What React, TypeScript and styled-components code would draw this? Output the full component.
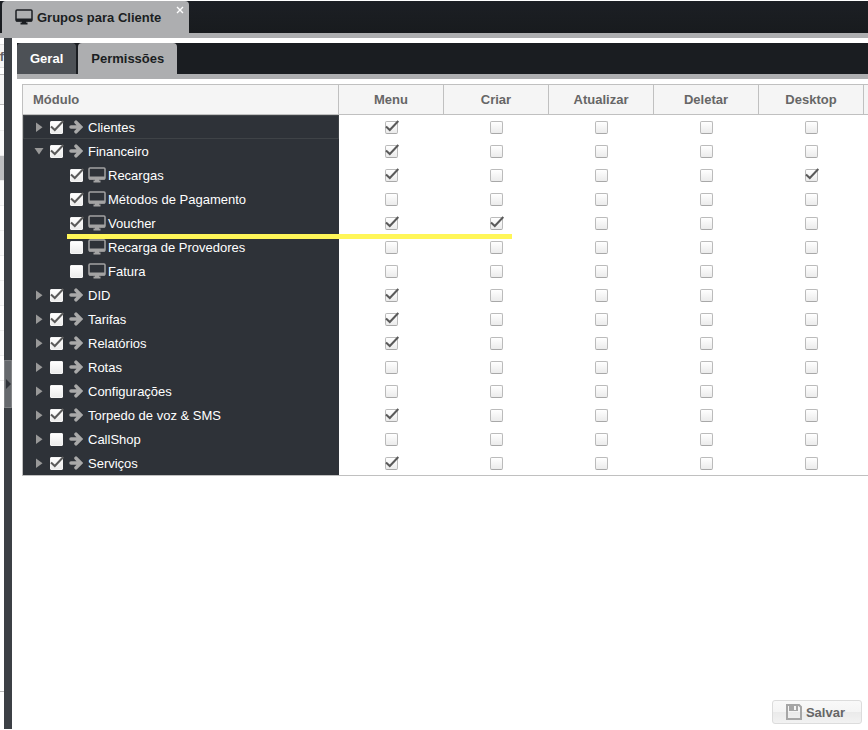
import React, { useState } from "react";
import styled, { createGlobalStyle, css } from "styled-components";

const GlobalStyle = createGlobalStyle`
  *, *::before, *::after { box-sizing: border-box; }
  body {
    margin: 0;
    background: #fff;
    font-family: "Liberation Sans", Helvetica, Arial, sans-serif;
    font-size: 13px;
  }
  button, input { font: inherit; }
`;

const Page = styled.div`
  display: flex;
  flex-direction: column;
  min-height: 100vh;
  padding: 1px 0;
  overflow: hidden;
`;

const WindowBar = styled.header`
  display: flex;
  padding: 0 2px;
  background: linear-gradient(#1c1f24, #181b1e);
  border-bottom: 5px solid #adaeb0;
`;

const WindowTab = styled.div`
  display: flex;
  align-items: flex-start;
  height: 32px;
  padding-left: 13px;
  background: #adaeb0;
  border-radius: 4px 4px 0 0;
`;

const WindowTitle = styled.button`
  display: flex;
  align-items: center;
  gap: 4px;
  height: 32px;
  padding: 0;
  border: 0;
  background: none;
  color: #1b1e22;
  font-weight: bold;
`;

const CloseButton = styled.button`
  display: flex;
  margin-left: 14px;
  padding: 5px 5px 4px 1px;
  border: 0;
  background: none;
`;

const Workspace = styled.div`
  display: flex;
  flex: 1;
`;

const SidePanel = styled.aside`
  flex: none;
  width: 4px;
  padding-top: 6px;
  overflow: hidden;
`;

const SideHeader = styled.div`
  display: flex;
  justify-content: flex-end;
  height: 24px;
  line-height: 23px;
  background: #f5f5f5;
  border: solid #ddd;
  border-width: 1px 0;
  color: #666;
  font-weight: bold;
`;

const SideToolbar = styled.div`
  height: 37px;
  margin-bottom: 1px;
  border: solid #bbb;
  border-width: 0 0 1px;
  background: linear-gradient(#fff 6px, #bbb 6px, #bbb 7px, #f5f5f5 7px);
`;

const SideRow = styled.div<{ $selected?: boolean; $alt?: boolean }>`
  height: 25px;
  border-bottom: 1px solid #ededed;
  background: ${(p) => (p.$selected ? "#bebfc1" : p.$alt ? "#fafafa" : "#fff")};
`;

const SideBody = styled.div`
  height: 586px;
  border-bottom: 1px solid #bbb;
`;

const Splitter = styled.div`
  display: flex;
  flex: none;
  align-items: center;
  width: 8px;
  background: #3c4045;
`;

const SplitterHandle = styled.button`
  display: flex;
  align-items: center;
  justify-content: center;
  width: 8px;
  height: 48px;
  padding: 0;
  border: 1px solid #808285;
  background: #66696d;
`;

const Main = styled.main`
  display: flex;
  flex: 1;
  flex-direction: column;
  min-width: 0;
  padding: 5px 0 5px 5px;
`;

const TabBar = styled.div`
  display: flex;
  gap: 2px;
  background: #1a1d21;
  border-bottom: 5px solid #adaeb0;
`;

const Tab = styled.button<{ $active?: boolean }>`
  height: 31px;
  padding: 0 13px;
  border: 0;
  border-radius: 4px 4px 0 0;
  background: #4d5156;
  color: #fff;
  font-weight: bold;
  ${(p) =>
    p.$active &&
    css`
      background: #adaeb0;
      color: #1b1e22;
    `}
`;

const GridPanel = styled.section`
  padding: 5px 0 0 5px;
`;

const Grid = styled.table`
  width: 100%;
  table-layout: fixed;
  border-collapse: separate;
  border-spacing: 0;
  border: solid #c0c0c0;
  border-width: 1px 0 1px 1px;
`;

const ModuleCol = styled.col`
  width: 316px;
`;

const FlagCol = styled.col`
  width: 105px;
`;

const HeadCell = styled.th<{ $start?: boolean }>`
  height: 30px;
  padding: 0 10px;
  border: solid #c0c0c0;
  border-width: 0 1px 1px 0;
  background: #f5f5f5;
  color: #666;
  text-align: ${(p) => (p.$start ? "left" : "center")};

  &:last-child {
    padding: 0;
    border-right: 0;
  }
`;

const ModuleCell = styled.th<{ $focused?: boolean }>`
  position: relative;
  height: 24px;
  padding: 0;
  background: #2e3238;
  color: #fff;
  font-weight: normal;
  text-align: left;
  ${(p) =>
    p.$focused &&
    css`
      box-shadow: inset 0 0 0 1px #3f4347;
    `}
`;

const ModuleContent = styled.div<{ $child?: boolean }>`
  display: flex;
  align-items: center;
  height: 24px;
  padding-left: ${(p) => (p.$child ? 47 : 10)}px;
`;

const Expander = styled.button`
  display: flex;
  align-items: center;
  justify-content: center;
  width: 12px;
  height: 12px;
  margin-right: 5px;
  padding: 0;
  border: 0;
  background: none;
`;

const ModuleLabel = styled.label`
  display: flex;
  align-items: center;
  white-space: nowrap;
`;

const IconSlot = styled.span<{ $child?: boolean }>`
  display: flex;
  flex: none;
  width: ${(p) => (p.$child ? 20 : 18)}px;
  margin-left: ${(p) => (p.$child ? 5 : 6)}px;
  margin-right: ${(p) => (p.$child ? 0 : 1)}px;
`;

const FlagCell = styled.td`
  height: 24px;
  padding: 0;
`;

const FlagContent = styled.div`
  display: flex;
  align-items: center;
  justify-content: center;
  height: 24px;
`;

const CheckFrame = styled.span`
  display: grid;
  flex: none;
  width: 13px;
  height: 13px;

  > * {
    grid-area: 1 / 1;
  }
`;

const CheckInput = styled.input`
  appearance: none;
  width: 13px;
  height: 13px;
  margin: 0;
  border: 1px solid #bbb;
  border-bottom-color: #a8a8a8;
  border-radius: 2px;
  background: linear-gradient(#fff, #ebebeb);

  ${ModuleContent} & {
    border-color: #f4f4f4;
    border-radius: 1px;
  }
`;

const CheckMark = styled.svg`
  pointer-events: none;
  overflow: visible;
`;

const Highlight = styled.div`
  position: absolute;
  z-index: 1;
  top: 23px;
  left: 44px;
  width: 445px;
  height: 5px;
  background: #fff658;
  pointer-events: none;
`;

const Footer = styled.footer`
  display: flex;
  justify-content: flex-end;
  margin-top: auto;
  padding-right: 6px;
`;

const SaveButton = styled.button`
  display: flex;
  align-items: center;
  gap: 4px;
  height: 24px;
  padding: 0 16px 0 13px;
  border: 1px solid #dcdcdc;
  border-radius: 3px;
  background: linear-gradient(#f9f9f9, #f4f4f4 50%, #eaeaea 50%, #f2f2f2);
  color: #666;
  font-weight: bold;
`;

function Monitor({ color }: { color: string }) {
  return (
    <svg width="18" height="16" viewBox="0 0 18 16" aria-hidden="true">
      <rect x="1" y="1" width="16" height="11" rx="1" fill="none" stroke={color} strokeWidth="1.5" />
      <path d="M1 9.500h16v3H1z" fill={color} />
      <path d="M7 12h4v1.500h1.500v2h-7v-2H7z" fill={color} />
    </svg>
  );
}

function Arrow() {
  return (
    <svg width="14" height="14" viewBox="0 0 14 14" aria-hidden="true">
      <path
        d="M2 7h9M7 2.200l4.800 4.800L7 11.800"
        fill="none"
        stroke="#a9a9a9"
        strokeWidth="3.500"
        strokeLinecap="round"
      />
    </svg>
  );
}

function Triangle({ open }: { open?: boolean }) {
  return (
    <svg width="10" height="10" viewBox="0 0 10 10" aria-hidden="true">
      <path d={open ? "M0.500 2h9l-4.500 6.500z" : "M2 0.500v9.500l6.500-4.700z"} fill="#999" />
    </svg>
  );
}

interface CheckProps {
  id?: string;
  label?: string;
  initial: boolean;
}

function Check({ id, label, initial }: CheckProps) {
  const [checked, setChecked] = useState(initial);
  return (
    <CheckFrame>
      <CheckInput
        type="checkbox"
        id={id}
        aria-label={label}
        checked={checked}
        onChange={(e) => setChecked(e.target.checked)}
      />
      {checked && (
        <CheckMark width="13" height="13" viewBox="0 0 13 13" aria-hidden="true">
          <path d="M1 5.500L4.800 9 13.300 0" fill="none" stroke="#5a5a5a" strokeWidth="2" />
        </CheckMark>
      )}
    </CheckFrame>
  );
}

interface Module {
  name: string;
  on: boolean;
  flags: string[];
  child?: boolean;
  open?: boolean;
  highlighted?: boolean;
}

const columns = ["Menu", "Criar", "Atualizar", "Deletar", "Desktop"];

const modules: Module[] = [
  { name: "Clientes", on: true, flags: ["Menu"] },
  { name: "Financeiro", on: true, flags: ["Menu"], open: true },
  { name: "Recargas", on: true, flags: ["Menu", "Desktop"], child: true },
  { name: "Métodos de Pagamento", on: true, flags: [], child: true },
  { name: "Voucher", on: true, flags: ["Menu", "Criar"], child: true, highlighted: true },
  { name: "Recarga de Provedores", on: false, flags: [], child: true },
  { name: "Fatura", on: false, flags: [], child: true },
  { name: "DID", on: true, flags: ["Menu"] },
  { name: "Tarifas", on: true, flags: ["Menu"] },
  { name: "Relatórios", on: true, flags: ["Menu"] },
  { name: "Rotas", on: false, flags: [] },
  { name: "Configurações", on: false, flags: [] },
  { name: "Torpedo de voz & SMS", on: true, flags: ["Menu"] },
  { name: "CallShop", on: false, flags: [] },
  { name: "Serviços", on: true, flags: ["Menu"] },
];

function ModuleRow({ module, index }: { module: Module; index: number }) {
  const id = `module-${index}`;
  return (
    <tr>
      <ModuleCell scope="row" $focused={index === 0}>
        <ModuleContent $child={module.child}>
          {!module.child && (
            <Expander aria-label={module.name} aria-expanded={!!module.open}>
              <Triangle open={module.open} />
            </Expander>
          )}
          <Check id={id} initial={module.on} />
          <ModuleLabel htmlFor={id}>
            <IconSlot $child={module.child}>
              {module.child ? <Monitor color="#a3a3a3" /> : <Arrow />}
            </IconSlot>
            {module.name}
          </ModuleLabel>
        </ModuleContent>
        {module.highlighted && <Highlight />}
      </ModuleCell>
      {columns.map((column) => (
        <FlagCell key={column}>
          <FlagContent>
            <Check label={`${module.name}: ${column}`} initial={module.flags.includes(column)} />
          </FlagContent>
        </FlagCell>
      ))}
      <FlagCell />
    </tr>
  );
}

export default function App() {
  return (
    <>
      <GlobalStyle />
      <Page>
        <WindowBar>
          <WindowTab>
            <WindowTitle>
              <Monitor color="#1b1e22" />
              Grupos para Cliente
            </WindowTitle>
            <CloseButton aria-label="Fechar">
              <svg width="8" height="8" viewBox="0 0 8 8" aria-hidden="true">
                <path d="M1 1l6 6M7 1L1 7" stroke="#fff" strokeWidth="1.400" />
              </svg>
            </CloseButton>
          </WindowTab>
        </WindowBar>
        <Workspace>
          <SidePanel>
            <SideHeader>f</SideHeader>
            <SideToolbar />
            <SideBody>
              {Array.from({ length: 11 }, (_, i) => (
                <SideRow key={i} $selected={i === 2} $alt={i % 2 === 1} />
              ))}
            </SideBody>
          </SidePanel>
          <Splitter>
            <SplitterHandle aria-label="Expandir painel">
              <svg width="5" height="10" viewBox="0 0 5 10" aria-hidden="true">
                <path d="M0 0l5 5-5 5z" fill="#2e3238" />
              </svg>
            </SplitterHandle>
          </Splitter>
          <Main>
            <TabBar role="tablist">
              <Tab role="tab" aria-selected={false}>Geral</Tab>
              <Tab role="tab" aria-selected $active>Permissões</Tab>
            </TabBar>
            <GridPanel>
              <Grid>
                <colgroup>
                  <ModuleCol />
                  {columns.map((column) => (
                    <FlagCol key={column} />
                  ))}
                  <col />
                </colgroup>
                <thead>
                  <tr>
                    <HeadCell scope="col" $start>Módulo</HeadCell>
                    {columns.map((column) => (
                      <HeadCell key={column} scope="col">{column}</HeadCell>
                    ))}
                    <HeadCell scope="col" />
                  </tr>
                </thead>
                <tbody>
                  {modules.map((module, index) => (
                    <ModuleRow key={module.name} module={module} index={index} />
                  ))}
                </tbody>
              </Grid>
            </GridPanel>
            <Footer>
              <SaveButton>
                <svg width="16" height="16" viewBox="0 0 16 16" aria-hidden="true">
                  <path d="M1 1h12l2 2v12H1z" fill="none" stroke="#a6a6a6" strokeWidth="2" />
                  <path d="M3 1h9v6H3z" fill="#a6a6a6" />
                  <path d="M8 2h2v4H8z" fill="#f5f5f5" />
                </svg>
                Salvar
              </SaveButton>
            </Footer>
          </Main>
        </Workspace>
      </Page>
    </>
  );
}
